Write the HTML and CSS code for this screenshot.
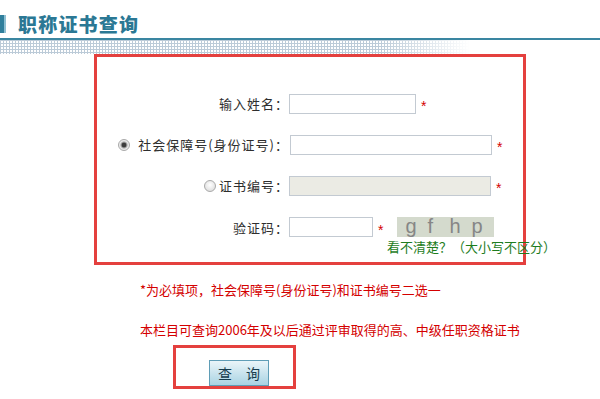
FILE: index.html
```html
<!DOCTYPE html>
<html lang="zh-CN">
<head>
<meta charset="utf-8">
<title>职称证书查询</title>
<link rel="stylesheet" href="styles.css">
</head>
<body>
<div class="head">
  <div class="title-row"><span class="bar"></span><h1 class="title">职称证书查询</h1></div>
  <div class="rule"></div>
  <div class="grid"></div>
</div>
<div class="form-box">
  <div class="row">
    <div class="label">输入姓名：</div>
    <div class="field"><input class="txt w1" type="text"><span class="req">*</span></div>
  </div>
  <div class="row">
    <div class="label"><input type="radio" name="t" class="radio r2" checked>社会保障号(身份证号)：</div>
    <div class="field"><input class="txt w2" type="text"><span class="req">*</span></div>
  </div>
  <div class="row">
    <div class="label"><input type="radio" name="t" class="radio r3">证书编号：</div>
    <div class="field"><input class="txt w3" type="text" disabled><span class="req">*</span></div>
  </div>
  <div class="row row4">
    <div class="label">验证码：</div>
    <div class="field"><input class="txt w4" type="text"><span class="req">*</span>
      <div class="captcha"><span>g</span><span>f</span><span>h</span><span>p</span></div>
    </div>
  </div>
  <div class="tip">看不清楚？（大小写不区分）</div>
</div>
<p class="note n1">*为必填项，社会保障号(身份证号)和证书编号二选一</p>
<p class="note n2">本栏目可查询2006年及以后通过评审取得的高、中级任职资格证书</p>
<div class="btn-box"><button class="btn" type="button">查　询</button></div>
</body>
</html>
```
FILE: styles.css
```css
body {
  margin: 0;
  font-family: "Noto Sans CJK SC", sans-serif;
  font-size: 13px;
  color: #333;
  background: #fff;
}
.title-row {
  height: 28px;
  padding-top: 10px;
  display: flex;
  align-items: center;
}
.bar {
  width: 6px;
  height: 18px;
  flex: none;
  background: linear-gradient(to right, #2f7f9c 0 4px, #8fc0d2 4px);
}
.title {
  margin: 0 0 0 12px;
  font-size: 19px;
  font-weight: 900;
  color: #2b7894;
  line-height: 28px;
  letter-spacing: 1.2px;
}
.rule {
  height: 2px;
  background: #3a86a1;
}
.grid {
  height: 14px;
  width: 470px;
  background-image:
    repeating-linear-gradient(to right, #bccbd8 0 1px, transparent 1px 3px),
    repeating-linear-gradient(to bottom, #bccbd8 0 1px, transparent 1px 3px);
  -webkit-mask-image: linear-gradient(to right, #000 0, #000 380px, transparent 470px);
  mask-image: linear-gradient(to right, #000 0, #000 380px, transparent 470px);
}
.form-box {
  margin-left: 94px;
  width: 432px;
  height: 211px;
  box-sizing: border-box;
  border: 3px solid #e4403e;
  padding-top: 26px;
}
.row {
  display: flex;
  align-items: center;
  height: 41px;
}
.label {
  width: 192px;
  flex: none;
  display: flex;
  justify-content: flex-end;
  align-items: center;
  white-space: nowrap;
  color: #2e2e2e;
  letter-spacing: 1px;
}
.field {
  display: flex;
  align-items: center;
}
.txt {
  height: 20px;
  box-sizing: border-box;
  border: 1px solid #c3cad2;
  padding: 0;
  margin: 0;
  background: #fff;
}
.w1 { width: 127px; }
.w2 { width: 202px; margin-left: 1px; }
.w3 { width: 202px; background: #ebebe4; }
.w4 { width: 84px; }
.req {
  color: #d40000;
  margin-left: 5px;
  font-family: "Liberation Sans", sans-serif;
  font-size: 14px;
  line-height: 1;
  padding-top: 5px;
}
.radio {
  -webkit-appearance: none;
  appearance: none;
  width: 12px;
  height: 12px;
  margin: 0;
  border-radius: 50%;
  border: 1px solid #a9a9a9;
  background: radial-gradient(circle at 50% 40%, #ffffff, #d6d6d6);
  box-sizing: border-box;
}
.radio:checked {
  background: radial-gradient(circle, #3c3c3c 0 2px, #8a8a8a 2.6px, #e6e6e6 4px, #f4f4f4 6px);
}
.r2 { margin-right: 8px; }
.r3 { margin-right: 3px; }
.row4 {
  height: 20px;
  margin-top: 11px;
}
.captcha {
  margin-left: 14px;
  width: 97px;
  height: 20px;
  box-sizing: border-box;
  padding-left: 8px;
  background: #d4dacd;
  display: flex;
  font-family: "Liberation Sans", sans-serif;
  font-size: 20px;
  line-height: 18px;
  color: #868686;
}
.captcha span {
  width: 22px;
  flex: none;
}
.tip {
  padding-left: 290px;
  margin-top: 2px;
  line-height: 16px;
  color: #1e7d1e;
  white-space: nowrap;
}
.note {
  margin: 0 0 0 140px;
  color: #d40000;
  line-height: 16px;
}
.n1 { margin-top: 17px; }
.n2 { margin-top: 24px; }
.btn-box {
  margin: 7px 0 0 173px;
  width: 123px;
  height: 44px;
  box-sizing: border-box;
  border: 3px solid #e4403e;
  padding: 12px 0 0 33px;
}
.btn {
  display: block;
  width: 60px;
  height: 26px;
  padding: 0;
  border: 1px solid #5f9db6;
  background: linear-gradient(#eaf5f9, #a9d3e3);
  font-family: "Noto Sans CJK SC", sans-serif;
  font-size: 14px;
  color: #173c4c;
}
```
